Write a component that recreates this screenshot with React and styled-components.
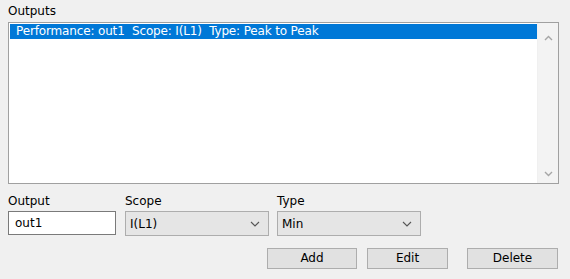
import React from 'react';
import styled, { createGlobalStyle } from 'styled-components';

const GlobalStyle = createGlobalStyle`
  html, body {
    margin: 0;
    padding: 0;
    background: #f0f0f0;
  }
  body {
    font-family: "DejaVu Sans", Verdana, sans-serif;
    font-size: 12px;
    color: #000;
  }
`;

const Panel = styled.div`
  width: 570px;
  height: 279px;
  box-sizing: border-box;
  padding: 4px 11px 0 8px;
  display: flex;
  flex-direction: column;
`;

const Caption = styled.div`
  height: 18px;
  line-height: 15px;
  font-size: 12px;
`;

const ListBox = styled.div`
  height: 162px;
  box-sizing: border-box;
  border: 1px solid #a0a0a0;
  background: #fff;
  display: flex;
`;

const Rows = styled.div`
  flex: 1;
  padding: 1px 0 0 1px;
`;

const Row = styled.div`
  height: 15px;
  line-height: 15px;
  padding-left: 6px;
  letter-spacing: -0.15px;
  background: ${p => (p.$selected ? '#0078d7' : 'transparent')};
  color: ${p => (p.$selected ? '#fff' : '#000')};
  white-space: pre;
`;

const ScrollBar = styled.div`
  width: 20px;
  background: #f3f3f3;
  border-left: 1px solid #f0f0f0;
  display: flex;
  flex-direction: column;
  justify-content: space-between;
  align-items: center;
  padding: 12px 0 6px;
`;

const Arrow = ({ up }) => (
  <svg width="9" height="6" viewBox="0 0 9 6">
    <path
      d={up ? 'M1 5 L4.5 1.5 L8 5' : 'M1 1 L4.5 4.5 L8 1'}
      fill="none"
      stroke="#a6a6a6"
      strokeWidth="1.4"
    />
  </svg>
);

const FieldRow = styled.div`
  display: flex;
  margin-top: 9px;
`;

const Field = styled.div`
  display: flex;
  flex-direction: column;
  width: ${p => p.$w}px;
  margin-right: ${p => p.$gap || 0}px;
`;

const FieldLabel = styled.div`
  height: 18px;
  line-height: 16px;
`;

const TextBox = styled.div`
  height: 24px;
  box-sizing: border-box;
  border: 1px solid #7a7a7a;
  background: #fff;
  padding-left: 6px;
  line-height: 22px;
`;

const Combo = styled.div`
  height: 25px;
  box-sizing: border-box;
  border: 1px solid #adadad;
  background: #e5e5e5;
  padding: 0 8px 0 4px;
  display: flex;
  align-items: center;
  justify-content: space-between;
`;

const Chevron = () => (
  <svg width="10" height="6" viewBox="0 0 10 6">
    <path d="M1 1 L5 5 L9 1" fill="none" stroke="#555" strokeWidth="1.1" />
  </svg>
);

const ButtonRow = styled.div`
  display: flex;
  margin-top: 12px;
  padding-left: 259px;
`;

const Button = styled.div`
  width: ${p => p.$w}px;
  height: 21px;
  box-sizing: border-box;
  margin-right: ${p => p.$gap || 0}px;
  border: 1px solid #adadad;
  background: #e1e1e1;
  text-align: center;
  line-height: 19px;
`;

export default function App() {
  return (
    <>
      <GlobalStyle />
      <Panel>
        <Caption>Outputs</Caption>
        <ListBox>
          <Rows>
            <Row $selected>{'Performance: out1  Scope: I(L1)  Type: Peak to Peak'}</Row>
          </Rows>
          <ScrollBar>
            <Arrow up />
            <Arrow />
          </ScrollBar>
        </ListBox>
        <FieldRow>
          <Field $w={108} $gap={9}>
            <FieldLabel>Output</FieldLabel>
            <TextBox>out1</TextBox>
          </Field>
          <Field $w={144} $gap={8}>
            <FieldLabel>Scope</FieldLabel>
            <Combo>
              <span>I(L1)</span>
              <Chevron />
            </Combo>
          </Field>
          <Field $w={144}>
            <FieldLabel>Type</FieldLabel>
            <Combo>
              <span>Min</span>
              <Chevron />
            </Combo>
          </Field>
        </FieldRow>
        <ButtonRow>
          <Button $w={90} $gap={10}>Add</Button>
          <Button $w={81} $gap={19}>Edit</Button>
          <Button $w={91}>Delete</Button>
        </ButtonRow>
      </Panel>
    </>
  );
}
